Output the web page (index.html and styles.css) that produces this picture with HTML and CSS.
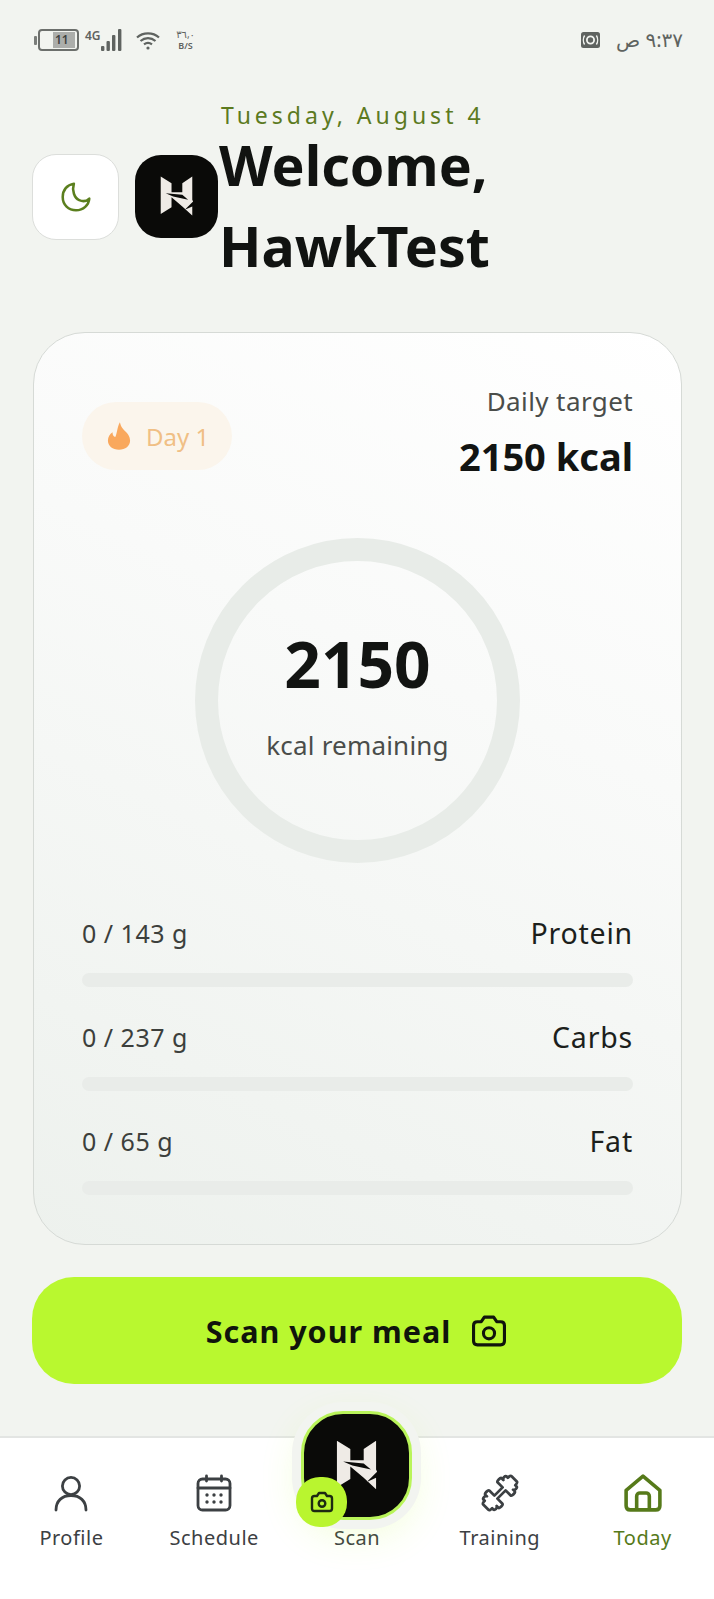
FILE: index.html
```html
<!DOCTYPE html>
<html lang="en">
<head>
    <meta charset="UTF-8">
    <meta name="viewport" content="width=device-width, initial-scale=1.0">
    <title>Today</title>
    <link rel="stylesheet" href="styles.css">
</head>
<body>
    <div class="screen">
        <!-- Status bar -->
        <div class="status-bar">
            <div class="status-left">
                <div class="battery">
                    <span class="battery-nub"></span>
                    <div class="battery-body"><span class="battery-fill"></span><span class="battery-text">11</span></div>
                </div>
                <span class="net-label">4G</span>
                <svg class="signal" width="22" height="22" viewBox="0 0 22 22" fill="#5f6360">
                    <rect x="1" y="17" width="3.4" height="5" rx="1"/>
                    <rect x="6.5" y="12" width="3.4" height="10" rx="1"/>
                    <rect x="12" y="6" width="3.4" height="16" rx="1"/>
                    <rect x="18" y="0" width="3.4" height="22" rx="1"/>
                </svg>
                <svg class="wifi" width="24" height="19" viewBox="0 0 24 19" fill="none" stroke="#5f6360" stroke-width="2.2">
                    <path d="M1 6.5C7 1 17 1 23 6.5"/>
                    <path d="M4.5 10C9 6.2 15 6.2 19.5 10"/>
                    <path d="M8 13.4C10.6 11.4 13.4 11.4 16 13.4"/>
                    <circle cx="12" cy="17" r="1.6" fill="#5f6360" stroke="none"/>
                </svg>
                <div class="speed"><span class="speed-num">٣٦,٠</span><span class="speed-unit">B/S</span></div>
            </div>
            <div class="status-right">
                <svg width="19" height="16" viewBox="0 0 19 16">
                    <rect width="19" height="16" rx="2.5" fill="#5f6360"/>
                    <circle cx="9.5" cy="8" r="3.6" fill="none" stroke="#f2f4f0" stroke-width="1.8"/>
                    <path d="M3.6 3.5C2 6 2 10 3.6 12.5M15.4 3.5C17 6 17 10 15.4 12.5" fill="none" stroke="#f2f4f0" stroke-width="1.4"/>
                </svg>
                <span class="clock" dir="rtl">٩:٣٧ ص</span>
            </div>
        </div>

        <!-- Header -->
        <div class="header">
            <button class="theme-btn">
                <svg width="34" height="34" viewBox="0 0 32 32" fill="none" stroke="#5b7f1e" stroke-width="2.4" stroke-linejoin="round">
                    <path d="M14 3.5C7.5 4.5 3.5 9.5 3.5 16C3.5 23.5 9 28.5 16 28.5C23 28.5 28 23.5 28.5 17.5C26 20 22.5 20.5 19 19C14.5 17 12 10 14 3.5Z"/>
                </svg>
            </button>
            <div class="logo">
                <svg width="83" height="83" viewBox="0 0 100 100">
                    <path fill="#efebe6" d="M31 26L44 34V45H57V34L69 26V54L70 56L60 66L69 62V73L57 62L44 51V63L31 71Z"/>
                    <path fill="#0a0a08" d="M37 46L57 48L64 54L46 50Z"/>
                </svg>
            </div>
            <div class="greeting">
                <div class="date">Tuesday, August 4</div>
                <h1>Welcome,<br>HawkTest</h1>
            </div>
        </div>

        <!-- Kartu kalori -->
        <div class="card">
            <div class="card-top">
                <div class="streak">
                    <svg width="24" height="28" viewBox="0 0 26 30" fill="#f9a85d">
                        <path d="M14 0C15 5 17 7 20 10C24 14 25 17 25 20C25 26 20 30 13 30C6 30 1 26 1 20C1 16 3 13 6 11C6 14 7 16 9 16C11 12 11 5 14 0Z"/>
                    </svg>
                    <span>Day 1</span>
                </div>
                <div class="target">
                    <div class="target-label">Daily target</div>
                    <div class="target-value">2150 kcal</div>
                </div>
            </div>

            <div class="ring">
                <div class="ring-value">2150</div>
                <div class="ring-label">kcal remaining</div>
            </div>

            <div class="macros">
                <div class="macro">
                    <div class="macro-row"><span class="macro-amount">0 / 143 g</span><span class="macro-name">Protein</span></div>
                    <div class="macro-bar"></div>
                </div>
                <div class="macro">
                    <div class="macro-row"><span class="macro-amount">0 / 237 g</span><span class="macro-name">Carbs</span></div>
                    <div class="macro-bar"></div>
                </div>
                <div class="macro">
                    <div class="macro-row"><span class="macro-amount">0 / 65 g</span><span class="macro-name">Fat</span></div>
                    <div class="macro-bar"></div>
                </div>
            </div>
        </div>

        <button class="scan-meal">
            <span>Scan your meal</span>
            <svg width="38" height="34" viewBox="0 0 24 22" fill="none" stroke="#10140c" stroke-width="2" stroke-linejoin="round">
                <path d="M2 7.5C2 6 3 5 4.5 5H7L9 2H15L17 5H19.5C21 5 22 6 22 7.5V17.5C22 19.2 21 20 19.5 20H4.5C3 20 2 19.2 2 17.5Z"/>
                <circle cx="12" cy="12.5" r="3.6"/>
            </svg>
        </button>

        <!-- Navigasi bawah -->
        <nav class="bottom-nav">
            <div class="nav-item">
                <svg class="nav-icon" width="36" height="36" viewBox="0 0 36 36" fill="none" stroke="#3c4043" stroke-width="2.8" stroke-linecap="round">
                    <circle cx="18" cy="11" r="8.6"/>
                    <path d="M3 35C3 26 9 20.5 18 20.5C27 20.5 33 26 33 35"/>
                </svg>
                <span>Profile</span>
            </div>
            <div class="nav-item">
                <svg class="nav-icon" width="36" height="36" viewBox="0 0 36 36" fill="none" stroke="#3c4043" stroke-width="2.8" stroke-linecap="round">
                    <rect x="2" y="4" width="32" height="31" rx="4.5"/>
                    <path d="M2 13H34M10.5 1V6M25.5 1V6"/>
                    <g fill="#3c4043" stroke="none">
                        <circle cx="11" cy="20" r="1.7"/><circle cx="18" cy="20" r="1.7"/><circle cx="25" cy="20" r="1.7"/>
                        <circle cx="11" cy="27" r="1.7"/><circle cx="18" cy="27" r="1.7"/><circle cx="25" cy="27" r="1.7"/>
                    </g>
                </svg>
                <span>Schedule</span>
            </div>
            <div class="nav-item nav-scan">
                <div class="scan-btn">
                    <svg width="105" height="103" viewBox="0 0 100 100">
                        <path fill="#efebe6" d="M31 26L44 34V45H57V34L69 26V54L70 56L60 66L69 62V73L57 62L44 51V63L31 71Z"/>
                        <path fill="#0a0a08" d="M37 46L57 48L64 54L46 50Z"/>
                    </svg>
                    <div class="scan-badge">
                        <svg width="24" height="22" viewBox="0 0 24 22" fill="none" stroke="#1d2a12" stroke-width="2.4" stroke-linejoin="round">
                            <path d="M2 7.5C2 6 3 5 4.5 5H7L9 2H15L17 5H19.5C21 5 22 6 22 7.5V17.5C22 19.2 21 20 19.5 20H4.5C3 20 2 19.2 2 17.5Z"/>
                            <circle cx="12" cy="12.5" r="3.3"/>
                        </svg>
                    </div>
                </div>
                <span>Scan</span>
            </div>
            <div class="nav-item">
                <svg class="nav-icon" width="38" height="36" viewBox="0 0 36 36" fill="none" stroke="#3c4043" stroke-width="2.6" stroke-linejoin="round">
                    <path transform="rotate(-45 18 18)" d="M-1 14.5C-1 13 1 13 2.5 13V11.5C2.5 9.5 7 9.5 7 11.5V9.5C7 7.5 12.5 7.5 12.5 9.5V16H23.5V9.5C23.5 7.5 29 7.5 29 9.5V11.5C29 9.5 33.5 9.5 33.5 11.5V13C35 13 37 13 37 14.5V21.5C37 23 35 23 33.5 23V24.5C33.5 26.5 29 26.5 29 24.5V26.5C29 28.5 23.5 28.5 23.5 26.5V20H12.5V26.5C12.5 28.5 7 28.5 7 26.5V24.5C7 26.5 2.5 26.5 2.5 24.5V23C1 23 -1 23 -1 21.5Z"/>
                </svg>
                <span>Training</span>
            </div>
            <div class="nav-item nav-active">
                <svg class="nav-icon" width="38" height="38" viewBox="0 0 36 36" fill="none" stroke="#567a1a" stroke-width="3.4" stroke-linejoin="round">
                    <path d="M2 15.5L18 2L34 15.5V30C34 33 32.5 34 30 34H6C3.5 34 2 33 2 30Z"/>
                    <path d="M12 34V21C12 19 13.5 18 15 18H21C22.5 18 24 19 24 21V34"/>
                </svg>
                <span>Today</span>
            </div>
        </nav>
    </div>
</body>
</html>
```

FILE: styles.css
```css
* {
    box-sizing: border-box;
}

body {
    margin: 0;
    font-family: "Noto Sans", "DejaVu Sans", sans-serif;
    background-color: #f2f4f0;
    color: #121412;
}

.screen {
    width: 714px;
    height: 1599px;
    display: flex;
    flex-direction: column;
    overflow: hidden;
}

/* Status bar */
.status-bar {
    height: 105px;
    padding: 29px 31px 0 34px;
    display: flex;
    justify-content: space-between;
    align-items: flex-start;
    color: #5f6360;
}

.status-left {
    display: flex;
    align-items: flex-start;
}

.battery {
    display: flex;
    align-items: center;
    gap: 1px;
}

.battery-nub {
    width: 3px;
    height: 9px;
    background-color: #7a7d7a;
    border-radius: 1px;
}

.battery-body {
    width: 41px;
    height: 22px;
    border: 2px solid #6c6f6c;
    border-radius: 4px;
    position: relative;
}

.battery-fill {
    position: absolute;
    top: 1px;
    bottom: 1px;
    left: 13px;
    right: 2px;
    background-color: #acaeab;
}

.battery-text {
    position: absolute;
    left: 15px;
    top: 1px;
    font-size: 12px;
    line-height: 16px;
    font-weight: 600;
    color: #3f423f;
}

.net-label {
    margin-left: 6px;
    font-size: 12px;
    line-height: 13px;
    font-weight: 600;
}

.signal {
    margin-left: -1px;
}

.wifi {
    margin: 2px 0 0 14px;
}

.speed {
    margin: 0 0 0 16px;
    width: 20px;
    display: flex;
    flex-direction: column;
    align-items: center;
    gap: 2px;
}

.speed-num {
    font-size: 10px;
    line-height: 10px;
}

.speed-unit {
    font-size: 9px;
    line-height: 10px;
    font-weight: 600;
}

.status-right {
    display: flex;
    align-items: flex-start;
    gap: 16px;
    padding-top: 3px;
}

.clock {
    font-size: 20px;
    line-height: 22px;
    margin-top: -3px;
}

/* Header */
.header {
    height: 183px;
    padding-left: 32px;
    display: flex;
    align-items: center;
}

.theme-btn {
    width: 87px;
    height: 86px;
    padding: 0;
    background-color: #fff;
    border: 1.5px solid #dcdedb;
    border-radius: 24px;
    display: flex;
    align-items: center;
    justify-content: center;
}

.logo {
    width: 83px;
    height: 83px;
    margin-left: 16px;
    background-color: #0a0a08;
    border-radius: 26px;
    flex-shrink: 0;
}

.logo svg {
    display: block;
}

.greeting {
    margin-left: 1px;
}

.date {
    font-size: 23px;
    line-height: 21px;
    letter-spacing: 4px;
    color: #5c7a1f;
    padding-left: 2px;
}

h1 {
    margin: -2px 0 2px;
    font-size: 55.5px;
    line-height: 81px;
    font-weight: 700;
    color: #111311;
}

/* Kartu */
.card {
    width: 649px;
    height: 913px;
    margin: 44px 0 0 33px;
    padding: 51px 48px 0;
    border: 1.5px solid #d6dad6;
    border-radius: 52px;
    background: linear-gradient(205deg, #ffffff 0%, #f9faf9 38%, #edf1ed 100%);
}

.card-top {
    display: flex;
    justify-content: space-between;
    align-items: center;
}

.streak {
    width: 150px;
    height: 68px;
    margin-top: 7px;
    padding-left: 25px;
    background-color: #fbf5ec;
    border-radius: 34px;
    display: flex;
    align-items: center;
    gap: 15px;
    font-size: 24px;
    color: #f0bf85;
}

.target {
    text-align: right;
}

.target-label {
    font-size: 26px;
    line-height: 34px;
    letter-spacing: 0.4px;
    color: #4a4d4a;
}

.target-value {
    font-size: 38px;
    line-height: 50px;
    margin-top: 13px;
    font-weight: 700;
}

.ring {
    width: 325px;
    height: 325px;
    margin: 57px auto 0;
    border: 23px solid #e8ece8;
    border-radius: 50%;
    display: flex;
    flex-direction: column;
    align-items: center;
}

.ring-value {
    margin-top: 58px;
    font-size: 64px;
    line-height: 90px;
    font-weight: 700;
}

.ring-label {
    margin-top: 19px;
    font-size: 26px;
    line-height: 34px;
    letter-spacing: 0.2px;
    color: #4a4d4a;
}

.macros {
    margin-top: 50px;
}

.macro {
    height: 104px;
}

.macro-row {
    display: flex;
    justify-content: space-between;
    align-items: center;
    height: 40px;
}

.macro-amount {
    font-size: 25px;
    letter-spacing: 0.5px;
    color: #3c3f3c;
}

.macro-name {
    font-size: 28.5px;
    letter-spacing: 0.8px;
    color: #1c1f1c;
}

.macro-bar {
    height: 14px;
    margin-top: 20px;
    background-color: #e9ece9;
    border-radius: 7px;
}

/* Tombol scan */
.scan-meal {
    width: 650px;
    height: 107px;
    margin: 32px 0 0 32px;
    background-color: #b9f82f;
    border: none;
    border-radius: 42px;
    display: flex;
    align-items: center;
    justify-content: center;
    gap: 19px;
    font-family: inherit;
    font-size: 30.5px;
    font-weight: 700;
    letter-spacing: 1px;
    color: #10140c;
}

/* Navigasi */
.bottom-nav {
    flex: 1;
    margin-top: 52px;
    padding-top: 36px;
    background-color: #fff;
    border-top: 2px solid #e3e5e3;
    display: grid;
    grid-template-columns: repeat(5, 1fr);
}

.nav-item {
    display: flex;
    flex-direction: column;
    align-items: center;
    font-size: 20px;
    letter-spacing: 0.5px;
    color: #3c4043;
}

.nav-item span {
    line-height: 28px;
}

.nav-icon {
    height: 38px;
    margin-bottom: 12px;
}

.nav-active {
    color: #567a1a;
}

.nav-scan {
    margin-top: -63px;
    z-index: 1;
}

.scan-btn {
    width: 111px;
    height: 109px;
    background-color: #0a0a08;
    border: 3px solid #b9f45a;
    border-radius: 42px;
    box-shadow: 0 0 0 9px #f2f4f0, 0 12px 40px rgba(185, 248, 47, 0.2);
    position: relative;
    margin-bottom: 4px;
}

.scan-btn svg {
    display: block;
}

.scan-badge {
    position: absolute;
    left: -8px;
    bottom: -10px;
    width: 51px;
    height: 50px;
    background-color: #b9f52f;
    border-radius: 24px;
    display: flex;
    align-items: center;
    justify-content: center;
}
```
